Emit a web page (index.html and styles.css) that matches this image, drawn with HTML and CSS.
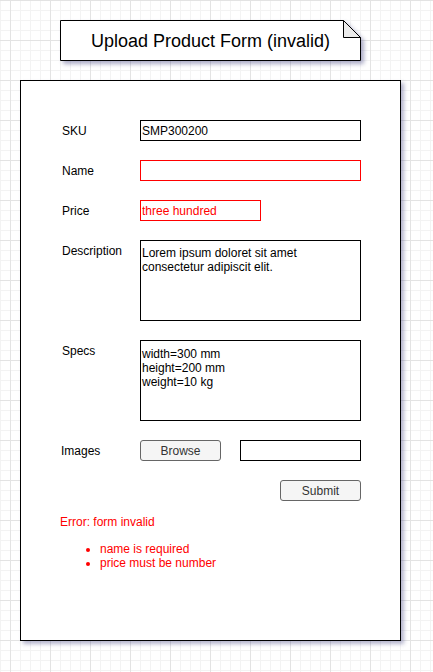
FILE: index.html
```html
<!DOCTYPE html>
<html lang="en">
<head>
<meta charset="utf-8">
<title>Upload Product Form (invalid)</title>
<link rel="stylesheet" href="styles.css">
</head>
<body>
  <div class="note">
    <svg class="note-shape" width="301" height="41" viewBox="0 0 301 41" aria-hidden="true">
      <path d="M0.5 0.5 H283.5 L300.5 17.5 V40.5 H0.5 Z" fill="#fff" stroke="#000" stroke-width="1"/>
      <path d="M283.5 0.5 V17.5 H300.5 Z" fill="#ebebeb" stroke="#000" stroke-width="1" stroke-linejoin="miter"/>
    </svg>
    <span class="note-text">Upload Product Form (invalid)</span>
  </div>

  <form class="form" onsubmit="return false">
    <div class="row">
      <label class="label">SKU</label>
      <input class="field wide" type="text" value="SMP300200">
    </div>
    <div class="row">
      <label class="label">Name</label>
      <input class="field wide invalid" type="text" value="">
    </div>
    <div class="row">
      <label class="label">Price</label>
      <input class="field short invalid" type="text" value="three hundred">
    </div>
    <div class="row tall">
      <label class="label">Description</label>
      <textarea class="area desc">Lorem ipsum doloret sit amet consectetur adipiscit elit.</textarea>
    </div>
    <div class="row tall">
      <label class="label">Specs</label>
      <textarea class="area specs">width=300 mm
height=200 mm
weight=10 kg</textarea>
    </div>
    <div class="row">
      <label class="label label-images">Images</label>
      <button class="btn" type="button">Browse</button>
      <input class="field file-name" type="text" value="">
    </div>
    <div class="row row-submit">
      <button class="btn" type="submit">Submit</button>
    </div>
    <div class="errors">
      <p class="error-title">Error: form invalid</p>
      <ul class="error-list">
        <li>name is required</li>
        <li>price must be number</li>
      </ul>
    </div>
  </form>
</body>
</html>
```

FILE: styles.css
```css
html, body {
  margin: 0;
  padding: 0;
}

body {
  width: 433px;
  height: 672px;
  overflow: hidden;
  font-family: "Liberation Sans", Arial, Helvetica, sans-serif;
  font-size: 12px;
  color: #000;
  background-color: #fff;
  background-image:
    linear-gradient(to right, #e3e3e3 1px, transparent 1px),
    linear-gradient(to bottom, #e3e3e3 1px, transparent 1px),
    linear-gradient(to right, #f3f3f3 1px, transparent 1px),
    linear-gradient(to bottom, #f3f3f3 1px, transparent 1px);
  background-size: 40px 40px, 40px 40px, 10px 10px, 10px 10px;
  background-position: 10px 0, 0 0, 0 0, 0 0;
  padding-top: 20px;
  box-sizing: border-box;
}

/* Title note */
.note {
  position: relative;
  margin-left: 60px;
  width: 301px;
  height: 41px;
  display: flex;
  align-items: center;
  justify-content: center;
}

.note-shape {
  position: absolute;
  left: 0;
  top: 0;
  filter: drop-shadow(3px 3px 2px rgba(70, 70, 130, 0.45));
}

.note-text {
  position: relative;
  font-size: 18px;
  line-height: 20px;
  padding-top: 1px;
}

/* Form panel */
.form {
  margin: 19px 0 0 20px;
  width: 381px;
  height: 561px;
  box-sizing: border-box;
  border: 1px solid #000;
  background: #fff;
  box-shadow: 3px 3px 4px rgba(70, 70, 130, 0.4);
  padding: 39px 39px 0 41px;
  display: flex;
  flex-direction: column;
}

.row {
  display: flex;
  align-items: flex-start;
  height: 40px;
  flex: none;
}

.row.tall {
  height: 100px;
}

.row-submit {
  justify-content: flex-end;
  height: 35px;
}

.label {
  width: 78px;
  flex: none;
  line-height: 22px;
  font-size: 12px;
}

.label-images {
  margin-left: -1px;
  width: 79px;
}

.field {
  box-sizing: border-box;
  height: 21px;
  border: 1px solid #000;
  border-radius: 0;
  padding: 0 1px;
  margin: 0;
  font: 12px "Liberation Sans", Arial, sans-serif;
  color: #000;
  background: #fff;
  outline: none;
}

.field.wide {
  width: 221px;
}

.field.short {
  width: 121px;
}

.field.invalid {
  border-color: #ff0000;
  color: #ff0000;
}

.field.file-name {
  width: 121px;
  margin-left: 19px;
}

.area {
  box-sizing: border-box;
  width: 221px;
  height: 81px;
  border: 1px solid #000;
  border-radius: 0;
  margin: 0;
  padding: 5px 1px 0;
  font: 12px "Liberation Sans", Arial, sans-serif;
  line-height: 14px;
  color: #000;
  resize: none;
  overflow: hidden;
  outline: none;
}

.area.specs {
  padding-top: 6px;
}

.btn {
  box-sizing: border-box;
  width: 81px;
  height: 21px;
  margin: 0;
  padding: 0;
  border: 1px solid #666;
  border-radius: 3px;
  background: #f5f5f5;
  color: #333;
  font: 12px "Liberation Sans", Arial, sans-serif;
}

/* Errors */
.errors {
  color: #ff0000;
  margin-left: -2px;
}

.error-title {
  margin: 0;
  line-height: 14px;
}

.error-list {
  margin: 13px 0 0;
  padding-left: 40px;
  line-height: 14px;
}
```
